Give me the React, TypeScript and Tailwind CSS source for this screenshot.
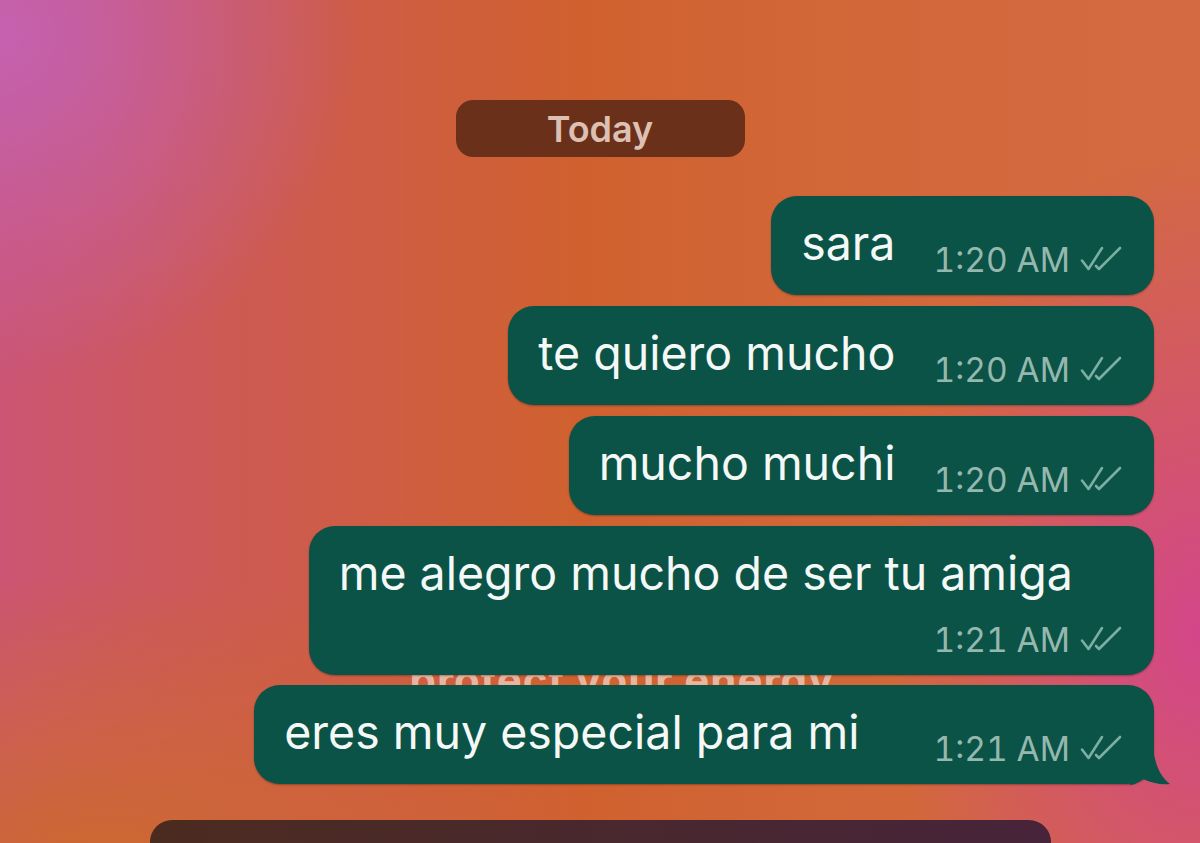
import React from 'react';

type Msg = {
  id: number;
  text: string;
  time: string;
  wrap?: boolean;
  tail?: boolean;
  gap?: string;
};

const MESSAGES: Msg[] = [
  { id: 1, text: 'sara', time: '1:20 AM' },
  { id: 2, text: 'te quiero mucho', time: '1:20 AM' },
  { id: 3, text: 'mucho muchi', time: '1:20 AM' },
  { id: 4, text: 'me alegro mucho de ser tu amiga', time: '1:21 AM', wrap: true },
  { id: 5, text: 'eres muy especial para mi', time: '1:21 AM', tail: true, gap: 'ml-[74px]' },
];

const Ticks: React.FC = () => (
  <svg width="42" height="26" viewBox="0 0 42 26" fill="none" className="ml-[10px]">
    <path d="M2 15.5 L8.5 24 L22 3" stroke="#7caea1" strokeWidth="2.6" strokeLinecap="round" strokeLinejoin="round" />
    <path d="M16 21 L19 24 L40 3" stroke="#7caea1" strokeWidth="2.6" strokeLinecap="round" strokeLinejoin="round" />
  </svg>
);

const Stamp: React.FC<{ time: string; className?: string }> = ({ time, className = '' }) => (
  <span className={`flex items-start ${className}`}>
    <span className="text-[33.5px] leading-none tabular-nums text-[#95b8ae]">{time}</span>
    <span className="pt-[1px]">
      <Ticks />
    </span>
  </span>
);

const Bubble: React.FC<{ msg: Msg }> = ({ msg }) => {
  if (msg.wrap) {
    return (
      <div className="relative flex h-[149px] flex-col rounded-[26px] bg-[#0b5347] pl-[30px] pr-[32px] shadow-[0_1px_2px_rgba(0,0,0,0.3)]">
        <span className="pt-[24px] pr-[49px] text-[46.5px] leading-none text-[#f4f8f6]">{msg.text}</span>
        <div className="mt-[27px] flex justify-end">
          <Stamp time={msg.time} />
        </div>
      </div>
    );
  }

  return (
    <div className="relative flex h-[99px] rounded-[26px] bg-[#0b5347] pl-[30px] pr-[32px] shadow-[0_1px_2px_rgba(0,0,0,0.3)]">
      <span className="pt-[24px] text-[46.5px] leading-none text-[#f4f8f6]">{msg.text}</span>
      <Stamp time={msg.time} className={`${msg.gap ?? 'ml-[38px]'} pt-[48px]`} />
      {msg.tail && (
        <svg width="46" height="58" viewBox="0 0 46 58" className="absolute bottom-[-1px] right-[-22px]">
          <path d="M0 0 L22 0 C22 30 27 47 40 57 C31 58 21 56 13 52 C9 55 4 58 0 58 Z" fill="#0b5347" />
        </svg>
      )}
    </div>
  );
};

export default function App() {
  return (
    <div className="min-h-screen w-full overflow-hidden bg-[radial-gradient(ellipse_30%_40%_at_0%_4%,#c461b0_0%,rgba(196,97,176,0)_100%),radial-gradient(ellipse_26%_55%_at_100%_72%,#d3468a_0%,rgba(211,70,138,0)_100%),radial-gradient(ellipse_40%_35%_at_8%_100%,#cd6a2c_0%,rgba(205,106,44,0)_100%),linear-gradient(90deg,#cb5573_0%,#cd5a52_20%,#d0612f_48%,#d2683a_75%,#d36a42_100%)] font-['Inter','Liberation_Sans',sans-serif]">
      <div className="flex flex-col pt-[100px]">
        <div className="mx-auto flex h-[57px] w-[289px] items-center justify-center rounded-[17px] bg-[#6a301a] text-[36px] font-semibold text-[#dcc1b3]">
          Today
        </div>

        <div className="mt-[39px] flex flex-col items-end pr-[46px]">
          {MESSAGES.map((msg) => (
            <React.Fragment key={msg.id}>
              {msg.tail ? (
                <div className="flex h-[10px] w-full justify-center overflow-hidden pl-[90px]">
                  <span className="text-[42px] font-bold leading-[10px] tracking-[1px] text-[#f1d2c4]/75">
                    protect your energy
                  </span>
                </div>
              ) : (
                <div className={msg.id === 1 ? 'h-0' : 'h-[11px]'} />
              )}
              <Bubble msg={msg} />
            </React.Fragment>
          ))}
        </div>

        <div className="ml-[150px] mt-[36px] h-[60px] w-[901px] rounded-t-[22px] bg-linear-to-r from-[#4b2b1f] to-[#47243a]" />
      </div>
    </div>
  );
}
